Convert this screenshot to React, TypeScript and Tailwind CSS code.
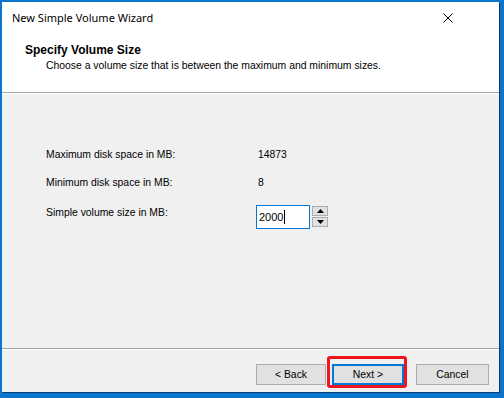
const ui = "font-['Liberation_Sans',Arial,sans-serif] text-[10.4px] leading-[13px] text-black";

function Row({ label, value }: { label: string; value: string }) {
  return (
    <div className="flex">
      <span className="w-[211px]">{label}</span>
      <span className="pl-[1px]">{value}</span>
    </div>
  );
}

function Spinner() {
  return (
    <div className="flex flex-col gap-[1px] ml-[2px] pt-[1px]">
      <button className="w-[16px] h-[10px] flex items-center justify-center bg-[#e1e1e1] border border-[#adadad]">
        <svg width="7" height="4" viewBox="0 0 7 4"><path d="M0 4 L3.5 0 L7 4 Z" fill="#000" /></svg>
      </button>
      <button className="w-[16px] h-[10px] flex items-center justify-center bg-[#e1e1e1] border border-[#adadad]">
        <svg width="7" height="4" viewBox="0 0 7 4"><path d="M0 0 L3.5 4 L7 0 Z" fill="#000" /></svg>
      </button>
    </div>
  );
}

function Btn({ children, w, primary }: { children: string; w: string; primary?: boolean }) {
  return (
    <button
      className={`${w} h-[21px] flex items-center justify-center bg-[#e1e1e1] ${
        primary ? "border-2 border-[#0078d7]" : "border border-[#adadad]"
      }`}
    >
      {children}
    </button>
  );
}

export default function App() {
  return (
    <div className={`w-[504px] h-[398px] bg-[#0a74cf] pt-[2px] pl-[2px] overflow-hidden ${ui}`}>
      <div className="w-[497px] h-[390px] flex flex-col bg-[#f0f0f0] shadow-[1px_1px_0_#063e73]">
        {/* Title bar */}
        <div className="h-[30px] flex items-center justify-between bg-white pl-[10px] pr-[46px]">
          <span className="font-['Noto_Sans',sans-serif] text-[11px] leading-[16px] pt-[1px]">
            New Simple Volume Wizard
          </span>
          <svg width="10" height="10" viewBox="0 0 10 10" className="mt-[1px]">
            <line x1="0.5" y1="0.5" x2="9.5" y2="9.5" stroke="#000" strokeWidth="1" />
            <line x1="9.5" y1="0.5" x2="0.5" y2="9.5" stroke="#000" strokeWidth="1" />
          </svg>
        </div>

        {/* Header */}
        <div className="h-[61px] bg-white border-b border-[#a0a0a0] pt-[12px] pl-[23px]">
          <div className="font-bold text-[12px]">Specify Volume Size</div>
          <div className="pl-[21px] mt-[2px]">Choose a volume size that is between the maximum and minimum sizes.</div>
        </div>

        {/* Body */}
        <div className="flex-1 border-t border-white pt-[54px] pl-[44px]">
          <Row label="Maximum disk space in MB:" value="14873" />
          <div className="mt-[15px]">
            <Row label="Minimum disk space in MB:" value="8" />
          </div>
          <div className="flex items-start mt-[16px]">
            <span className="w-[210px] mt-[1px]">Simple volume size in MB:</span>
            <div className="flex items-start">
              <div className="w-[54px] h-[24px] border border-[#0078d7] bg-white flex items-center pl-[2px]">
                <span className="text-[11px]">2000</span>
                <span className="w-[1px] h-[14px] bg-black ml-[1px]" />
              </div>
              <Spinner />
            </div>
          </div>
        </div>

        {/* Footer */}
        <div className="h-[44px] border-t border-[#a0a0a0]">
          <div className="h-full border-t border-white flex items-start pt-[14px] pl-[254px]">
            <Btn w="w-[70px]">{"< Back"}</Btn>
            <div className="ml-[1px] -mt-[8px] pl-[2px] pt-[5px] border-[3px] border-[#f0141e] rounded-[3px]">
              <Btn w="w-[72px]" primary>{"Next >"}</Btn>
            </div>
            <div className="ml-[9px]">
              <Btn w="w-[73px]">Cancel</Btn>
            </div>
          </div>
        </div>
      </div>
    </div>
  );
}
